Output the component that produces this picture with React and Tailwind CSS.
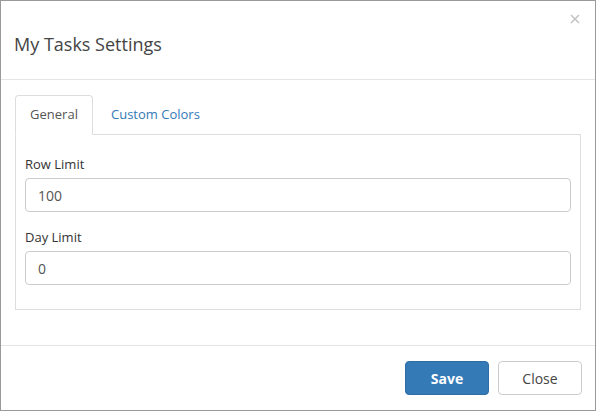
export default function App() {
  const font = { fontFamily: '"Open Sans", "Noto Sans", sans-serif' };
  return (
    <div style={font} className="w-[596px] h-[411px] border border-[#999] bg-white flex flex-col text-[#333]">
      <div className="relative h-[79px] border-b border-[#e5e5e5] px-[13px] pt-[31px] shrink-0">
        <div className="text-[18px] leading-[25px] text-[#444]">My Tasks Settings</div>
        <svg className="absolute right-[15px] top-[13px]" width="10" height="10" viewBox="0 0 10 10">
          <path d="M1 1 L9 9 M9 1 L1 9" stroke="#c4c4c4" strokeWidth="1.6" />
        </svg>
      </div>
      <div className="px-[14px] pt-[15px] pb-[35px] shrink-0">
        <div className="flex h-[40px] border-b border-[#ddd]">
          <div className="h-[40px] w-[78px] border border-[#ddd] border-b-white rounded-t-[4px] bg-white flex items-center justify-center text-[13px] text-[#555] -mb-px">
            General
          </div>
          <div className="h-[39px] px-[18px] flex items-center text-[13px] text-[#337ab7]">Custom Colors</div>
        </div>
        <div className="border border-t-0 border-[#ddd] px-[9px] pt-[19px] pb-[24px]">
          <div className="text-[13px] font-medium leading-[20px] mb-[4px]">Row Limit</div>
          <div className="h-[34px] border border-[#ccc] rounded-[4px] flex items-center px-[12px] text-[14px] text-[#555] mb-[15px]">100</div>
          <div className="text-[13px] font-medium leading-[20px] mb-[4px]">Day Limit</div>
          <div className="h-[34px] border border-[#ccc] rounded-[4px] flex items-center px-[12px] text-[14px] text-[#555]">0</div>
        </div>
      </div>
      <div className="flex-1 border-t border-[#e5e5e5] flex justify-end items-start pt-[15px] pr-[13px] gap-[9px]">
        <div className="w-[84px] h-[34px] bg-[#337ab7] border border-[#2e6da4] rounded-[4px] text-white text-[14px] font-bold flex items-center justify-center">Save</div>
        <div className="w-[84px] h-[34px] bg-white border border-[#ccc] rounded-[4px] text-[#444] text-[14px] flex items-center justify-center">Close</div>
      </div>
    </div>
  );
}
